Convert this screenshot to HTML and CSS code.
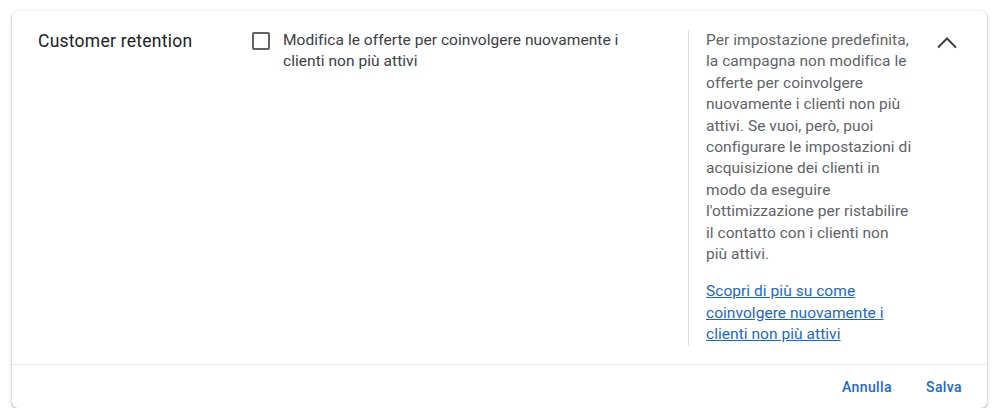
FILE: index.html
```html
<!DOCTYPE html>
<html lang="it">
<head>
<meta charset="utf-8">
<link rel="stylesheet" href="styles.css">
</head>
<body>
<div class="card">
  <div class="main">
    <div class="title">Customer retention</div>
    <div class="option">
      <span class="box"></span>
      <span class="label">Modifica le offerte per coinvolgere nuovamente i clienti non più attivi</span>
    </div>
    <div class="help">
      <p class="desc">Per impostazione predefinita, la campagna non modifica le offerte per coinvolgere nuovamente i clienti non più attivi. Se vuoi, però, puoi configurare le impostazioni di acquisizione dei clienti in modo da eseguire l'ottimizzazione per ristabilire il contatto con i clienti non più attivi.</p>
      <a class="link" href="#">Scopri di più su come coinvolgere nuovamente i clienti non più attivi</a>
    </div>
    <div class="toggle">
      <svg width="22" height="14" viewBox="0 0 22 14"><polyline points="2,12.5 11,3.5 20,12.5" fill="none" stroke="#3c4043" stroke-width="2"/></svg>
    </div>
  </div>
  <div class="footer">
    <button class="btn">Annulla</button>
    <button class="btn">Salva</button>
  </div>
</div>
</body>
</html>
```
FILE: styles.css
```css
* { box-sizing: border-box; }
body {
  margin: 0;
  background: #fff;
  font-family: Roboto, "Liberation Sans", Arial, sans-serif;
}
.card {
  margin: 11px 0 0 12px;
  width: 975px;
  height: 397px;
  background: #fff;
  border-radius: 6px;
  box-shadow: 0 1px 2px rgba(60,64,67,.3), 0 1px 3px 1px rgba(60,64,67,.15);
  display: flex;
  flex-direction: column;
}
.main {
  flex: 1;
  display: flex;
  padding: 19px 0 18px 26px;
  border-bottom: 1px solid #e8eaed;
}
.title {
  width: 214px;
  flex: none;
  font-size: 17.5px;
  line-height: 22px;
  letter-spacing: 0.25px;
  color: #202124;
}
.option {
  width: 436px;
  flex: none;
  display: flex;
  align-items: flex-start;
}
.box {
  flex: none;
  width: 18px;
  height: 18px;
  border: 2px solid #5f6368;
  border-radius: 2px;
  margin-top: 2px;
}
.label {
  margin-left: 13px;
  width: 352px;
  flex: none;
  font-size: 15.5px;
  line-height: 21.4px;
  letter-spacing: 0.05px;
  color: #3c4043;
}
.help {
  width: 224px;
  flex: none;
  border-left: 1px solid #dadce0;
  padding-left: 17px;
  font-size: 15.5px;
  line-height: 21.4px;
  letter-spacing: 0.05px;
  color: #5f6368;
}
.desc { margin: 0 0 16px; }
.link {
  color: #1967d2;
  text-decoration: underline;
}
.toggle {
  margin-left: 24px;
  padding-top: 4px;
}
.footer {
  height: 45px;
  display: flex;
  justify-content: flex-end;
  align-items: center;
  padding-right: 17px;
  gap: 18px;
}
.btn {
  border: 0;
  background: none;
  font-family: inherit;
  font-size: 14px;
  font-weight: 500;
  letter-spacing: 0.4px;
  color: #1967d2;
  padding: 0 8px;
  margin-top: 2px;
}
```
